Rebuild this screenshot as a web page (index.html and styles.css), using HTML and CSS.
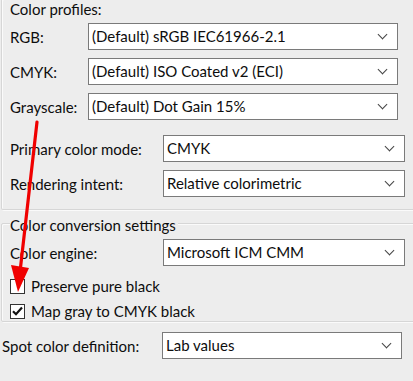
FILE: index.html
```html
<!DOCTYPE html>
<html lang="en">
<head>
  <meta charset="UTF-8" />
  <title>Color settings</title>
  <link rel="stylesheet" href="styles.css">
</head>
<body>
  <div class="panel">

    <div class="group group-profiles">
      <div class="caption">Color profiles:</div>

      <div class="row row-profile first-profile">
        <label>RGB:</label>
        <div class="combo">(Default) sRGB IEC61966-2.1</div>
      </div>
      <div class="row row-profile">
        <label>CMYK:</label>
        <div class="combo">(Default) ISO Coated v2 (ECI)</div>
      </div>
      <div class="row row-profile">
        <label>Grayscale:</label>
        <div class="combo">(Default) Dot Gain 15%</div>
      </div>

      <div class="row row-wide first-wide">
        <label>Primary color mode:</label>
        <div class="combo">CMYK</div>
      </div>
      <div class="row row-wide">
        <label>Rendering intent:</label>
        <div class="combo">Relative colorimetric</div>
      </div>
    </div>

    <div class="group group-conversion">
      <div class="legend">Color conversion settings</div>

      <div class="row row-wide">
        <label>Color engine:</label>
        <div class="combo">Microsoft ICM CMM</div>
      </div>

      <div class="check first-check">
        <span class="box"></span>
        <span>Preserve pure black</span>
      </div>
      <div class="check">
        <span class="box checked">
          <svg width="11" height="10" viewBox="0 0 11 10"><path d="M1 5.2 L4 8.2 L10 1.5" fill="none" stroke="#111" stroke-width="2.2"/></svg>
        </span>
        <span>Map gray to CMYK black</span>
      </div>
    </div>

    <div class="row row-spot">
      <label>Spot color definition:</label>
      <div class="combo">Lab values</div>
    </div>

    <!-- annotation arrow -->
    <svg class="arrow" width="413" height="381" viewBox="0 0 413 381">
      <line x1="37" y1="122" x2="20" y2="272" stroke="#f00000" stroke-width="3.2" stroke-linecap="round"/>
      <polygon points="11,265 29,268 18,292" fill="#f00000"/>
    </svg>
  </div>
</body>
</html>
```

FILE: styles.css
```css
body {
  margin: 0;
  background: #ededed;
  font-family: Lato, "Noto Sans", sans-serif;
  font-size: 15px;
  color: #0d0d0d;
}

.panel {
  position: relative;
  width: 413px;
  height: 381px;
  overflow: hidden;
}

.group {
  margin-left: 1px;
  width: 406px;
  border: 1px solid #d6d6d6;
  box-shadow: inset 1px 1px 0 #fafafa, 1px 1px 0 #fafafa;
  border-radius: 2px;
}

.group-profiles {
  border-top: none;
  padding: 0 0 10px 8px;
  height: 200px;
}

.caption {
  height: 20px;
  line-height: 20px;
  margin-top: -1px;
}

.row {
  display: flex;
  align-items: center;
  height: 27px;
  margin-top: 8px;
}

.row label {
  flex: none;
}

.first-profile {
  margin-top: 4px;
}

.row-profile label {
  width: 78px;
}

.row-profile .combo {
  width: 310px;
}

.row-wide label {
  width: 153px;
}

.row-wide .combo {
  width: 242px;
}

.first-wide {
  margin-top: 15px;
}

.combo {
  position: relative;
  box-sizing: border-box;
  height: 27px;
  line-height: 25px;
  padding-left: 3px;
  background: #fff;
  border: 1px solid #7a7a7a;
  white-space: nowrap;
}

.combo::after {
  content: "";
  position: absolute;
  right: 11px;
  top: 7px;
  width: 6px;
  height: 6px;
  border-right: 1px solid #444;
  border-bottom: 1px solid #444;
  transform: rotate(45deg);
}

.group-conversion {
  margin-top: 13px;
  padding: 0 0 4px 8px;
  height: 93px;
}

.legend {
  height: 18px;
  line-height: 18px;
  margin-top: -8px;
  width: max-content;
  padding-right: 2px;
  background: #ededed;
}

.group-conversion .row {
  margin-top: 5px;
}

.check {
  display: flex;
  align-items: center;
  gap: 6px;
  height: 20px;
  margin-top: 5px;
}

.first-check {
  margin-top: 10px;
}

.box {
  box-sizing: border-box;
  width: 15px;
  height: 15px;
  border: 1px solid #333;
  background: #fff;
  display: flex;
  align-items: center;
  justify-content: center;
}

.row-spot {
  margin-top: 10px;
  padding-left: 2px;
}

.row-spot label {
  width: 160px;
}

.row-spot .combo {
  width: 240px;
}

.arrow {
  position: absolute;
  left: 0;
  top: 0;
  pointer-events: none;
}
```
